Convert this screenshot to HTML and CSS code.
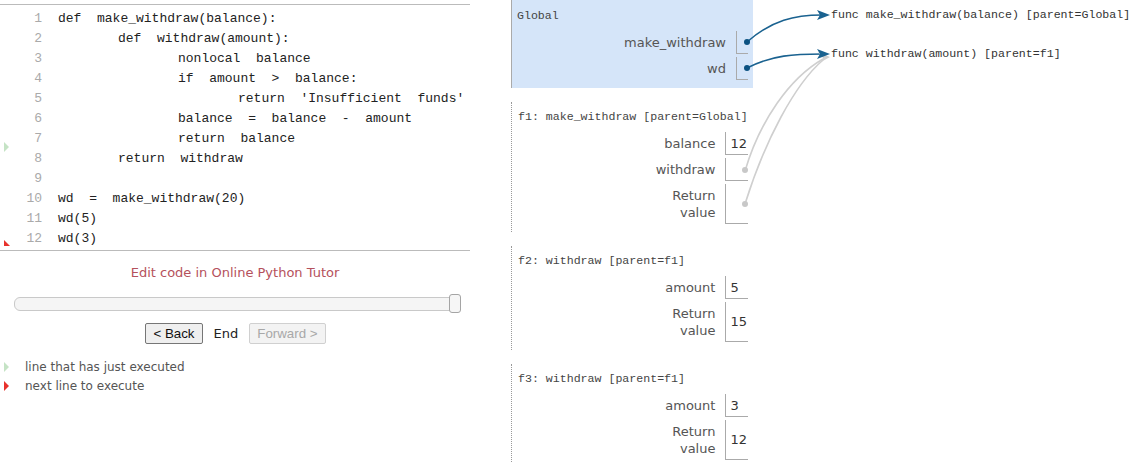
FILE: index.html
```html
<!DOCTYPE html>
<html>
<head>
<meta charset="utf-8">
<link rel="stylesheet" href="styles.css">
</head>
<body>
<div class="page">
  <div class="left">
    <div class="code">
      <div class="ln"><span class="num">1</span><span class="src">def  make_withdraw(balance):</span></div>
      <div class="ln"><span class="num">2</span><span class="src i1">def  withdraw(amount):</span></div>
      <div class="ln"><span class="num">3</span><span class="src i2">nonlocal  balance</span></div>
      <div class="ln"><span class="num">4</span><span class="src i2">if  amount  &gt;  balance:</span></div>
      <div class="ln"><span class="num">5</span><span class="src i3">return  'Insufficient  funds'</span></div>
      <div class="ln"><span class="num">6</span><span class="src i2">balance  =  balance  -  amount</span></div>
      <div class="ln"><span class="num">7</span><span class="src i2">return  balance</span></div>
      <div class="ln"><span class="num">8</span><span class="src i1">return  withdraw</span></div>
      <div class="ln"><span class="num">9</span><span class="src"></span></div>
      <div class="ln"><span class="num">10</span><span class="src">wd  =  make_withdraw(20)</span></div>
      <div class="ln"><span class="num">11</span><span class="src">wd(5)</span></div>
      <div class="ln"><span class="num">12</span><span class="src">wd(3)</span></div>
      <svg class="ptr ptr-prev" width="8" height="12" viewBox="0 0 8 12"><polygon points="1,0 1,10 6,5" fill="#c5e3c5"/></svg>
      <svg class="ptr ptr-next" width="8" height="8" viewBox="0 0 8 8"><polygon points="1,1 1,7 7,7" fill="#e8322c"/></svg>
    </div>
    <div class="edit">Edit code in Online Python Tutor</div>
    <div class="slider"><div class="track"></div><div class="handle"></div></div>
    <div class="nav">
      <button class="btn">&lt; Back</button>
      <span class="end">End</span>
      <button class="btn disabled">Forward &gt;</button>
    </div>
    <div class="legend">
      <div class="leg"><svg width="10" height="12" viewBox="0 0 10 12"><polygon points="4,1 4,11 9,6" fill="#c5e3c5"/></svg><span>line that has just executed</span></div>
      <div class="leg"><svg width="10" height="12" viewBox="0 0 10 12"><polygon points="4,1 4,11 9,6" fill="#e8322c"/></svg><span>next line to execute</span></div>
    </div>
  </div>
  <div class="viz">
    <div class="frames">
      <div class="frame global">
        <div class="fhead">Global</div>
        <table class="vars">
          <tr><td class="vname">make_withdraw</td><td class="vval ref"></td></tr>
          <tr><td class="vname">wd</td><td class="vval ref"></td></tr>
        </table>
      </div>
      <div class="frame">
        <div class="fhead">f1: make_withdraw [parent=Global]</div>
        <table class="vars">
          <tr><td class="vname">balance</td><td class="vval">12</td></tr>
          <tr><td class="vname">withdraw</td><td class="vval"></td></tr>
          <tr><td class="vname two">Return<br>value</td><td class="vval"></td></tr>
        </table>
      </div>
      <div class="frame">
        <div class="fhead">f2: withdraw [parent=f1]</div>
        <table class="vars">
          <tr><td class="vname">amount</td><td class="vval">5</td></tr>
          <tr><td class="vname two">Return<br>value</td><td class="vval">15</td></tr>
        </table>
      </div>
      <div class="frame">
        <div class="fhead">f3: withdraw [parent=f1]</div>
        <table class="vars">
          <tr><td class="vname">amount</td><td class="vval">3</td></tr>
          <tr><td class="vname two">Return<br>value</td><td class="vval">12</td></tr>
        </table>
      </div>
    </div>
    <div class="objects">
      <div class="obj">func make_withdraw(balance) [parent=Global]</div>
      <div class="obj">func withdraw(amount) [parent=f1]</div>
    </div>
  </div>
</div>
<svg class="arrows" width="1134" height="463" viewBox="0 0 1134 463">
  <g fill="none" stroke-width="1.6">
    <path d="M745,171 C760,120 790,78 823,59" stroke="#cfcfcf"/>
    <path d="M745,204 C765,140 795,84 823,60" stroke="#cfcfcf"/>
    <path d="M747,42 C772,20 795,15 822,15" stroke="#1a6290"/>
    <path d="M747,68 C772,55 795,54 822,54" stroke="#1a6290"/>
  </g>
  <polygon points="818,52 830,57 821,62 823,58" fill="#cfcfcf"/>
  <polygon points="817,10 830,15 817,20 820,15" fill="#1a6290"/>
  <polygon points="817,49 830,54 817,59 820,54" fill="#1a6290"/>
  <circle cx="747" cy="42" r="3" fill="#0c5282"/>
  <circle cx="747" cy="68" r="3" fill="#0c5282"/>
  <circle cx="745" cy="170" r="3" fill="#c8c8c8"/>
  <circle cx="745" cy="204" r="3" fill="#c8c8c8"/>
</svg>
</body>
</html>
```
FILE: styles.css
```css
html, body {
  margin: 0;
  padding: 0;
  background: #fff;
}
.page {
  display: flex;
  align-items: flex-start;
}
.left {
  width: 470px;
  flex: none;
}
.code {
  position: relative;
  border-top: 1px solid #bbb;
  border-bottom: 1px solid #bbb;
  margin-top: 4px;
  padding: 4px 0 1px 0;
  font-family: "Liberation Mono", monospace;
  font-size: 13px;
  color: #222;
}
.ln {
  display: flex;
  height: 20px;
  line-height: 20px;
}
.num {
  width: 42px;
  flex: none;
  text-align: right;
  color: #aaa;
}
.src {
  white-space: pre;
  padding-left: 16px;
}
.src.i1 { padding-left: 76px; }
.src.i2 { padding-left: 136px; }
.src.i3 { padding-left: 196px; }
.ptr {
  position: absolute;
  left: 3px;
}
.ptr-prev { top: 137px; }
.ptr-next { top: 234px; }

.edit {
  margin-top: 14px;
  text-align: center;
  font-family: "DejaVu Sans", sans-serif;
  font-size: 13px;
  line-height: 16px;
  color: #b5515c;
}
.slider {
  position: relative;
  margin: 13px 9px 0 14px;
  height: 18px;
}
.track {
  position: absolute;
  left: 0;
  right: 0;
  top: 3px;
  height: 12px;
  border: 1px solid #c9c9c9;
  border-radius: 6px;
  background: #f5f5f5;
}
.handle {
  position: absolute;
  right: 0;
  top: 0;
  width: 10px;
  height: 17px;
  border: 1px solid #a5a5a5;
  border-radius: 3px;
  background: #f6f6f6;
}
.nav {
  margin-top: 11px;
  display: flex;
  justify-content: center;
  align-items: center;
  gap: 11px;
  padding-left: 1px;
}
.btn {
  font-family: "Liberation Sans", Arial, sans-serif;
  font-size: 13.33px;
  height: 21px;
  padding: 0 7px;
  border: 1px solid #767676;
  border-radius: 2px;
  background: #efefef;
  color: #111;
  line-height: 19px;
}
.btn.disabled {
  border-color: #d0d0d0;
  color: #a8a8a8;
  background: #f3f3f3;
}
.end {
  font-family: "DejaVu Sans", sans-serif;
  font-size: 13px;
  color: #222;
}
.legend {
  margin-top: 13px;
  font-family: "DejaVu Sans", sans-serif;
  font-size: 12px;
  color: #555;
}
.leg {
  display: flex;
  align-items: center;
  height: 19px;
}
.leg svg {
  width: 10px;
  margin-right: 15px;
}

.viz {
  margin-left: 41px;
  display: flex;
  align-items: flex-start;
}
.frames {
  width: 242px;
  flex: none;
}
.frame {
  border-left: 1px dotted #999;
  padding: 7px 0 5px 6px;
  margin-bottom: 14px;
}
.frame.global {
  background: #d5e5f9;
  border-left: 1px solid #aaa;
  padding: 8px 0 5px 5px;
  margin-bottom: 14px;
}
.fhead {
  font-family: "Liberation Mono", monospace;
  font-size: 11.6px;
  line-height: 16px;
  color: #444;
}
.vars {
  margin: 4px 5px 0 auto;
  border-collapse: separate;
  border-spacing: 0 3px;
  font-family: "DejaVu Sans", sans-serif;
  font-size: 13px;
}
.vname {
  text-align: right;
  padding: 0 10px 0 0;
  color: #555;
  height: 23px;
  line-height: 17px;
}
.vname.two {
  height: 40px;
}
.vval {
  border-left: 1px solid #aaa;
  border-bottom: 1px solid #aaa;
  padding: 0 1px 0 4px;
  min-width: 10px;
  color: #333;
}
.vval.ref {
  min-width: 6px;
}
.objects {
  margin-left: 78px;
  padding-top: 7px;
}
.obj {
  font-family: "Liberation Mono", monospace;
  font-size: 11.6px;
  line-height: 16px;
  color: #333;
  white-space: nowrap;
  margin-bottom: 23px;
}
.arrows {
  position: absolute;
  left: 0;
  top: 0;
  pointer-events: none;
}
```
